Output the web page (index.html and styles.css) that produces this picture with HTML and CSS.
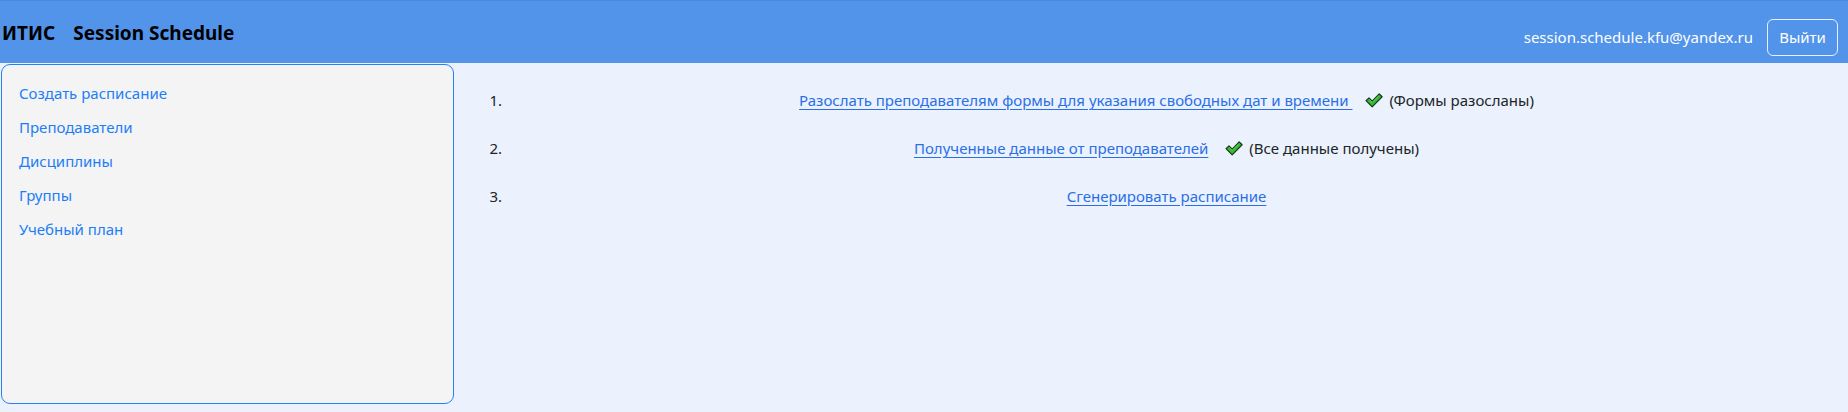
FILE: index.html
```html
<!DOCTYPE html>
<html lang="ru">
<head>
<meta charset="utf-8">
<title>ИТИС Session Schedule</title>
<link rel="stylesheet" href="styles.css">
</head>
<body>
<header class="topbar">
  <div class="brand"><span class="brand-org">ИТИС</span><span class="brand-name">Session Schedule</span></div>
  <div class="user">
    <span class="user-email">session.schedule.kfu@yandex.ru</span>
    <button class="logout" type="button">Выйти</button>
  </div>
</header>
<div class="layout">
  <nav class="sidebar">
    <a class="side-link" href="#">Создать расписание</a>
    <a class="side-link" href="#">Преподаватели</a>
    <a class="side-link" href="#">Дисциплины</a>
    <a class="side-link" href="#">Группы</a>
    <a class="side-link" href="#">Учебный план</a>
  </nav>
  <main class="content">
    <ol class="steps">
      <li class="step">
        <div class="step-body">
          <a class="step-link" href="#">Разослать преподавателям формы для указания свободных дат и времени&nbsp;</a>
          <svg class="check check-after-space" viewBox="0 0 18 15" width="18" height="15" aria-hidden="true"><path d="M1 7.6 L4 5 L7.2 8.1 L14.2 1 L17.1 3.8 L7.2 13.8 Z" fill="#2fba2f" stroke="#173417" stroke-width="1.2" stroke-linejoin="round"/><path d="M4 6.3 L7.2 9.4 L14.2 2.3" fill="none" stroke="#7ee07e" stroke-width="0.8"/></svg>
          <span class="status">(Формы разосланы)</span>
        </div>
      </li>
      <li class="step">
        <div class="step-body">
          <a class="step-link" href="#">Полученные данные от преподавателей</a>
          <svg class="check" viewBox="0 0 18 15" width="18" height="15" aria-hidden="true"><path d="M1 7.6 L4 5 L7.2 8.1 L14.2 1 L17.1 3.8 L7.2 13.8 Z" fill="#2fba2f" stroke="#173417" stroke-width="1.2" stroke-linejoin="round"/><path d="M4 6.3 L7.2 9.4 L14.2 2.3" fill="none" stroke="#7ee07e" stroke-width="0.8"/></svg>
          <span class="status">(Все данные получены)</span>
        </div>
      </li>
      <li class="step">
        <div class="step-body">
          <a class="step-link" href="#">Сгенерировать расписание</a>
        </div>
      </li>
    </ol>
  </main>
</div>
</body>
</html>
```

FILE: styles.css
```css
* { box-sizing: border-box; }
html, body { margin: 0; padding: 0; }
body {
  background: #ebf2fd;
  font-family: "Noto Sans", "Open Sans", sans-serif;
  color: #212529;
  font-size: 15px;
}
.topbar {
  height: 63px;
  background: #5294ea;
  border-top: 1px solid #4b88dd;
  display: flex;
  align-items: center;
  justify-content: space-between;
  padding: 0 10px 0 2px;
}
.brand {
  font-weight: 700;
  font-size: 19px;
  color: #000;
  display: flex;
  gap: 18px;
  margin-top: 1px;
}
.user {
  display: flex;
  align-items: center;
  gap: 14px;
  margin-top: 10px;
}
.user-email {
  color: #fff;
  font-size: 15px;
}
.logout {
  font-family: inherit;
  font-size: 15px;
  color: #fff;
  background: transparent;
  border: 1px solid #e6efff;
  border-radius: 6px;
  width: 71px;
  height: 37px;
  padding: 0;
}
.layout {
  display: flex;
  align-items: flex-start;
}
.sidebar {
  width: 453px;
  height: 340px;
  margin: 1px 0 0 1px;
  background: #f4f4f4;
  border: 1px solid #2680f0;
  border-radius: 9px;
  display: flex;
  flex-direction: column;
  padding: 11px 0 0 17px;
}
.side-link {
  color: #1c7ef7;
  text-decoration: none;
  line-height: 34px;
  font-size: 15px;
}
.content {
  flex: 1;
}
.steps {
  margin: 0;
  padding: 25px 21px 0 52px;
}
.step {
  line-height: 24px;
  margin-bottom: 24px;
}
.step-body {
  display: flex;
  justify-content: center;
  align-items: center;
}
.step-link {
  color: #2a6fe8;
  text-decoration: underline;
  text-underline-offset: 3px;
}
.check {
  margin: 0 6px 0 17px;
}
.check-after-space {
  margin-left: 13px;
}
.status {
  color: #212529;
}
```
